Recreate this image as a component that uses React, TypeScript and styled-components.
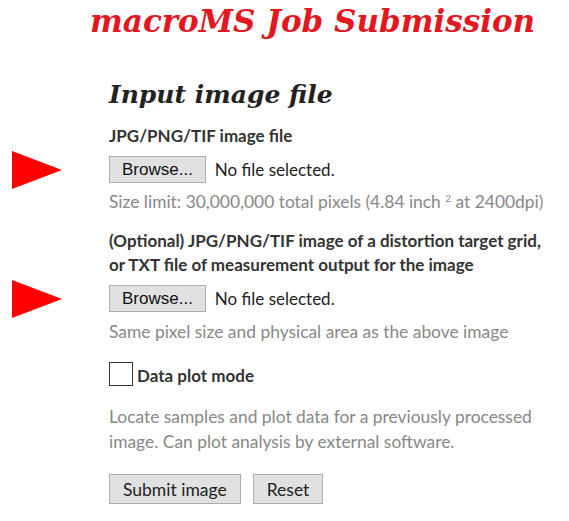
import styled, { createGlobalStyle } from "styled-components";

const GlobalStyle = createGlobalStyle`
  html, body {
    margin: 0;
    padding: 0;
    background: #ffffff;
  }
  body {
    font-family: Lato, "Open Sans", sans-serif;
    font-size: 17px;
    color: #333333;
  }
`;

export default function App() {
  return (
    <>
      <GlobalStyle />
      <Page>
        <Title>macroMS Job Submission</Title>
        <Form>
          <SectionTitle>Input image file</SectionTitle>

          <Label>JPG/PNG/TIF image file</Label>
          <FileRow>
            <Arrow />
            <BrowseBtn type="button">Browse...</BrowseBtn>
            <FileName>No file selected.</FileName>
          </FileRow>
          <Help $top={3}>
            Size limit: 30,000,000 total pixels (4.84 inch <sup>2</sup> at 2400dpi)
          </Help>

          <Label>
            (Optional) JPG/PNG/TIF image of a distortion target grid,
            <br />
            or TXT file of measurement output for the image
          </Label>
          <FileRow>
            <Arrow />
            <BrowseBtn type="button">Browse...</BrowseBtn>
            <FileName>No file selected.</FileName>
          </FileRow>
          <Help $top={8}>Same pixel size and physical area as the above image</Help>

          <CheckRow>
            <CheckBox type="checkbox" />
            <CheckLabel>Data plot mode</CheckLabel>
          </CheckRow>
          <Note>
            Locate samples and plot data for a previously processed
            <br />
            image. Can plot analysis by external software.
          </Note>

          <Actions>
            <ActionBtn type="button">Submit image</ActionBtn>
            <ActionBtn type="button">Reset</ActionBtn>
          </Actions>
        </Form>
      </Page>
    </>
  );
}

function Arrow() {
  return (
    <ArrowSvg width="50" height="38" viewBox="0 0 50 38">
      <polygon points="0,0 50,19 0,38" fill="#ff0000" />
    </ArrowSvg>
  );
}

const Page = styled.div`
  width: 569px;
  min-height: 521px;
`;

const Title = styled.h1`
  margin: 0;
  padding-top: 2px;
  padding-left: 90px;
  font-family: "DejaVu Serif", "Liberation Serif", serif;
  font-style: italic;
  font-weight: 700;
  font-size: 31px;
  line-height: 38px;
  color: #e3171f;
`;

const Form = styled.div`
  padding-left: 109px;
  padding-top: 38px;
`;

const SectionTitle = styled.h2`
  margin: 0 0 12px;
  font-family: "DejaVu Serif", "Liberation Serif", serif;
  font-style: italic;
  font-weight: 700;
  font-size: 25px;
  line-height: 34px;
  color: #222222;
`;

const Label = styled.div`
  font-weight: 700;
  font-size: 17px;
  line-height: 24px;
  color: #333333;
`;

const FileRow = styled.div`
  display: flex;
  align-items: center;
  margin: 8px 0 0 -97px;
  height: 27px;
`;

const ArrowSvg = styled.svg`
  flex: none;
  margin-right: 47px;
`;

const BrowseBtn = styled.button`
  height: 27px;
  padding: 0 12px;
  background: #e1e1e1;
  border: 1px solid #adadad;
  border-radius: 0;
  font-family: "Liberation Sans", Arial, sans-serif;
  font-size: 17px;
  color: #111111;
`;

const FileName = styled.span`
  margin-left: 9px;
  font-size: 17px;
  color: #222222;
`;

const Help = styled.div<{ $top: number }>`
  margin: ${(p) => p.$top}px 0 15px;
  font-size: 17.4px;
  line-height: 24px;
  color: #888888;
  sup {
    font-size: 10px;
    vertical-align: 6px;
  }
`;

const Note = styled.div`
  margin-top: 18px;
  font-size: 17.4px;
  line-height: 25px;
  color: #888888;
`;

const CheckRow = styled.div`
  display: flex;
  align-items: flex-end;
  margin-top: 18px;
`;

const CheckBox = styled.input`
  appearance: none;
  margin: 0 4px 0 0;
  width: 24px;
  height: 24px;
  border: 1px solid #333333;
  background: #ffffff;
`;

const CheckLabel = styled.span`
  font-weight: 700;
  font-size: 17px;
  line-height: 20px;
  color: #333333;
`;

const Actions = styled.div`
  display: flex;
  gap: 12px;
  margin-top: 20px;
`;

const ActionBtn = styled.button`
  height: 30px;
  padding: 0 13px;
  background: #e1e1e1;
  border: 1px solid #adadad;
  border-radius: 0;
  font-family: Lato, sans-serif;
  font-size: 17.5px;
  color: #222222;
`;
